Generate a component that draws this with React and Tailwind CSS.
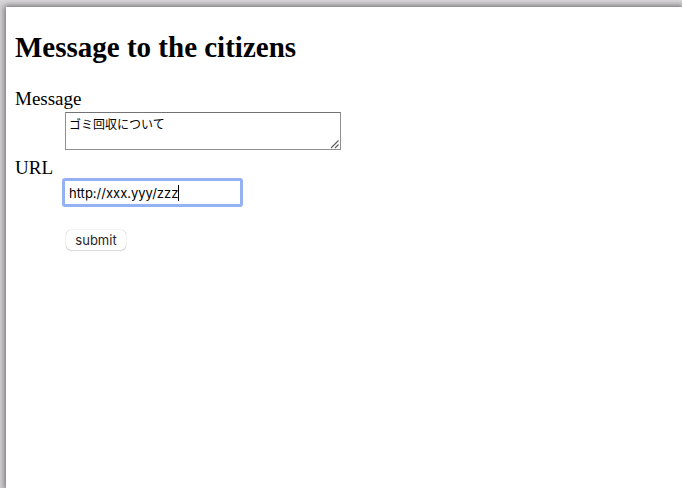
export default function App() {
  return (
    <div className="min-h-screen bg-linear-to-b from-[#d9d7d9] from-0% to-[#d0ced0] to-[7px] pt-[7px] pl-[6px] flex flex-col overflow-hidden">
      <main className="grow bg-white px-[9px] pt-6 text-black shadow-[0_0_6px_1px_rgba(0,0,0,0.5)] font-['Liberation_Serif',serif]">
        <h1 className="text-[29px] leading-8 font-bold">Message to the citizens</h1>
        <form onSubmit={(event) => event.preventDefault()}>
          <dl className="mt-6 text-[19px] leading-6">
            <dt>
              <label htmlFor="message">Message</label>
            </dt>
            <dd className="ml-[50px] pt-px">
              <div className="relative w-[276px] max-w-full">
                <textarea
                  id="message"
                  rows={2}
                  defaultValue="ゴミ回収について"
                  className="block h-[38px] w-full resize-none overflow-hidden border border-[#909090] border-t-[#737373] bg-white px-[3px] py-[3px] text-[12px] leading-4 outline-none font-['Noto_Sans_CJK_JP',sans-serif]"
                />
                <svg aria-hidden="true" viewBox="0 0 10 10" className="pointer-events-none absolute right-px bottom-px size-[10px]">
                  <path d="M1 9 8.5 1.5M5 9 8.5 5.5" stroke="#606060" strokeWidth="1.2" fill="none" />
                </svg>
              </div>
            </dd>
            <dt className="pt-[6px]">
              <label htmlFor="url" className="block h-[22px]">URL</label>
            </dt>
            <dd className="ml-[47px]">
              <div className="flex h-[29px] w-[181px] items-center rounded-[3px] border-3 border-[#94b1f3] bg-white pl-1">
                <input
                  id="url"
                  type="text"
                  defaultValue="http://xxx.yyy/zzz"
                  className="field-sizing-content bg-transparent text-[13px] leading-4 outline-none font-[Inter,sans-serif]"
                />
                <span aria-hidden="true" className="h-4 w-px bg-black" />
              </div>
            </dd>
          </dl>
          <button
            type="submit"
            className="mt-[23px] ml-[51px] block h-5 w-[60px] rounded-[5px] bg-white text-center text-[13px] leading-5 text-[#262626] shadow-[0_0_1px_rgba(0,0,0,0.4),0_1px_1px_rgba(0,0,0,0.12)] font-[Inter,sans-serif]"
          >
            submit
          </button>
        </form>
      </main>
    </div>
  );
}
